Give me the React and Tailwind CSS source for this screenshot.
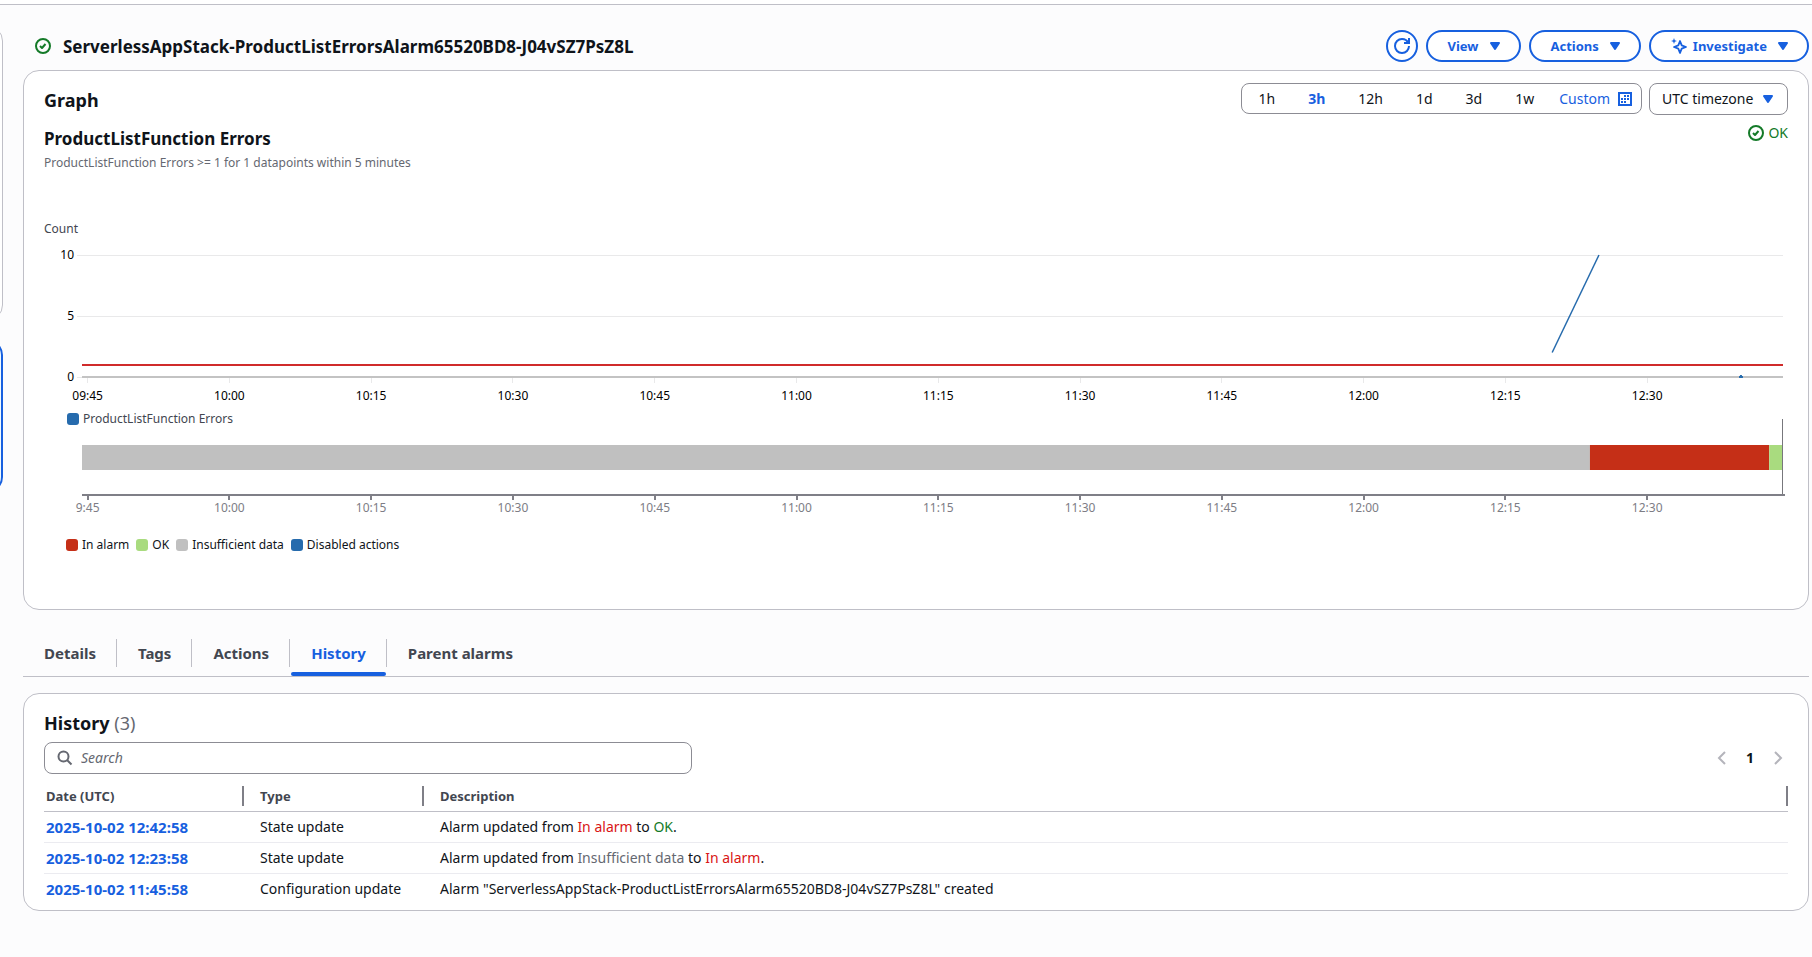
import React from "react";

const TICKS = ["09:45", "10:00", "10:15", "10:30", "10:45", "11:00", "11:15", "11:30", "11:45", "12:00", "12:15", "12:30"];
const tickX = (i) => `${(0.33 + i * 8.335).toFixed(3)}%`;

const RANGES = ["1h", "3h", "12h", "1d", "3d", "1w"];

const LEGEND = [
  { label: "In alarm", swatch: "bg-[#c52f17]" },
  { label: "OK", swatch: "bg-[#a9db7f]" },
  { label: "Insufficient data", swatch: "bg-[#c0c0c0]" },
  { label: "Disabled actions", swatch: "bg-[#266bad]" },
];

const STATE_COLOR = {
  "In alarm": "text-[#d91515]",
  OK: "text-[#147a28]",
  "Insufficient data": "text-[#656871]",
};

const EVENTS = [
  { date: "2025-10-02 12:42:58", type: "State update", from: "In alarm", to: "OK" },
  { date: "2025-10-02 12:23:58", type: "State update", from: "Insufficient data", to: "In alarm" },
  {
    date: "2025-10-02 11:45:58",
    type: "Configuration update",
    text: 'Alarm "ServerlessAppStack-ProductListErrorsAlarm65520BD8-J04vSZ7PsZ8L" created',
  },
];

function OkIcon() {
  return (
    <svg viewBox="0 0 16 16" className="h-4 w-4 shrink-0" fill="none" stroke="#147a28" strokeWidth="2" aria-hidden="true">
      <circle cx="8" cy="8" r="7" />
      <path d="M5 8l2 2 3.500-4" strokeLinejoin="round" />
    </svg>
  );
}

function Caret() {
  return (
    <svg viewBox="0 0 16 16" className="h-4 w-4 shrink-0" aria-hidden="true">
      <path d="M4 5h8l-4 6z" fill="#1760df" stroke="#1760df" strokeWidth="2" strokeLinejoin="round" />
    </svg>
  );
}

function PillButton({ children }) {
  return (
    <button
      type="button"
      className="flex h-8 items-center gap-2 rounded-full border-2 border-[#1760df] bg-white pr-4 pl-5 text-[13px] leading-5 font-bold text-[#1760df]"
    >
      {children}
      <Caret />
    </button>
  );
}

function Header() {
  return (
    <header className="flex h-8 items-center justify-between">
      <div className="flex items-center gap-3 pl-3">
        <OkIcon />
        <h1 className="pt-px text-[17px] leading-6 font-bold">ServerlessAppStack-ProductListErrorsAlarm65520BD8-J04vSZ7PsZ8L</h1>
      </div>
      <div className="flex items-center gap-2">
        <button
          type="button"
          aria-label="Refresh"
          className="flex h-8 w-8 items-center justify-center rounded-full border-2 border-[#1760df] bg-white"
        >
          <svg viewBox="0 0 16 16" className="h-4 w-4" fill="none" stroke="#1760df" strokeWidth="2" aria-hidden="true">
            <path d="M10 5h5V0" />
            <path d="M15 8a6.957 6.957 0 0 1-7 7 6.957 6.957 0 0 1-7-7 6.957 6.957 0 0 1 7-7 6.870 6.870 0 0 1 6.300 4" />
          </svg>
        </button>
        <PillButton>View</PillButton>
        <PillButton>Actions</PillButton>
        <PillButton>
          <span className="flex items-center gap-1.5">
            <svg viewBox="0 0 16 16" className="h-4 w-4" aria-hidden="true">
              <path
                d="M9 3l1.700 4.300L15 9l-4.300 1.700L9 15l-1.700-4.300L3 9l4.300-1.700z"
                fill="none"
                stroke="#1760df"
                strokeWidth="1.800"
                strokeLinejoin="round"
              />
              <path d="M3 0l.8 2.200L6 3l-2.200.8L3 6l-.8-2.200L0 3l2.200-.8z" fill="#1760df" />
            </svg>
            Investigate
          </span>
        </PillButton>
      </div>
    </header>
  );
}

function RangePicker() {
  return (
    <div className="flex items-start gap-[7px]">
      <div className="flex h-[31px] items-center gap-px rounded-lg border border-[#8c8c94] pr-[9px] text-sm leading-5">
        {RANGES.map((r) => (
          <button
            key={r}
            type="button"
            aria-pressed={r === "3h"}
            className={r === "3h" ? "px-4 font-bold text-[#1760df]" : "px-4"}
          >
            {r}
          </button>
        ))}
        <button type="button" className="flex items-center gap-2 pl-2 text-[#1760df]">
          Custom
          <svg viewBox="0 0 14 14" className="h-[14px] w-[14px]" shapeRendering="crispEdges" aria-hidden="true">
            <path d="M0 0h14v14H0z" fill="#1760df" />
            <path d="M2 2h10v10H2z" fill="#fff" />
            <path
              d="M6 3h2v2H6zM9 3h2v2H9zM3 6h2v2H3zM6 6h2v2H6zM9 6h2v2H9zM3 9h2v2H3zM6 9h2v2H6z"
              fill="#1760df"
            />
          </svg>
        </button>
      </div>
      <div className="relative">
        <select
          aria-label="Timezone"
          className="h-8 appearance-none rounded-lg border border-[#8c8c94] bg-white pr-[33px] pl-3 text-sm leading-5"
        >
          <option>UTC timezone</option>
        </select>
        <span className="pointer-events-none absolute inset-y-0 right-3 flex items-center">
          <Caret />
        </span>
      </div>
    </div>
  );
}

function MetricChart() {
  return (
    <div className="flex h-[160px] pr-[5px]">
      <svg className="h-full w-[38px] shrink-0 text-xs" aria-hidden="true">
        <g textAnchor="end" fill="#000">
          <text x="30" y="14">10</text>
          <text x="30" y="75">5</text>
          <text x="30" y="136">0</text>
        </g>
      </svg>
      <svg className="h-full min-w-0 flex-1 overflow-visible text-xs" role="img" aria-label="ProductListFunction Errors over time">
        <g stroke="#e9e9ea" shapeRendering="crispEdges">
          <line x1="-5" x2="100%" y1="10.500" y2="10.500" />
          <line x1="-5" x2="100%" y1="71.500" y2="71.500" />
          <line x1="-5" x2="100%" y1="132.500" y2="132.500" />
          {TICKS.map((t, i) => (
            <line key={t} x1={tickX(i)} x2={tickX(i)} y1="133" y2="138" />
          ))}
        </g>
        <line x1="0" x2="100%" y1="132" y2="132" stroke="#c3c3c3" strokeWidth="2" />
        <line x1="0" x2="100%" y1="120" y2="120" stroke="#d02b2b" strokeWidth="2" />
        <line x1="86.430%" x2="89.180%" y1="107.500" y2="10" stroke="#266bad" strokeWidth="1.500" />
        <svg x="97.410%" y="130" width="4" height="4">
          <path d="M1 0h2v1h1v2H0V1h1z" fill="#266bad" />
        </svg>
        <g textAnchor="middle" fill="#000">
          {TICKS.map((t, i) => (
            <text key={t} x={tickX(i)} y="155">{t}</text>
          ))}
        </g>
      </svg>
    </div>
  );
}

function StateTimeline() {
  return (
    <div className="-mt-2 flex h-[95px] pr-[5px] pl-[38px]">
      <svg className="h-full w-full overflow-visible text-xs" role="img" aria-label="Alarm state timeline">
        <rect x="0" y="26" width="88.650%" height="25" fill="#c0c0c0" />
        <rect x="88.650%" y="26" width="10.540%" height="25" fill="#c52f17" />
        <rect x="99.190%" y="26" width="0.810%" height="25" fill="#a9db7f" />
        <g stroke="#7f7f87" shapeRendering="crispEdges">
          <line x1="99.970%" x2="99.970%" y1="0" y2="75" stroke="#77777c" />
          <line x1="0" x2="100.100%" y1="76" y2="76" strokeWidth="2" />
          {TICKS.map((t, i) => (
            <line key={t} x1={tickX(i)} x2={tickX(i)} y1="77" y2="81" strokeWidth="2" />
          ))}
        </g>
        <g textAnchor="middle" fill="#7d7d85">
          {TICKS.map((t, i) => (
            <text key={t} x={tickX(i)} y="93">{t.replace(/^0/, "")}</text>
          ))}
        </g>
      </svg>
    </div>
  );
}

function GraphPanel() {
  return (
    <section className="mt-2 flex flex-col rounded-2xl border border-[#bfbfc7] bg-white px-5 pt-3 pb-14">
      <div className="flex items-start justify-between">
        <h2 className="pt-[5px] text-lg leading-6 font-bold">Graph</h2>
        <RangePicker />
      </div>
      <div className="flex items-start justify-between pt-2">
        <h3 className="pt-1 text-[17px] leading-6 font-bold">ProductListFunction Errors</h3>
        <span className="flex items-center gap-1 text-sm leading-5 text-[#147a28]">
          <OkIcon />
          OK
        </span>
      </div>
      <p className="pt-1 text-xs leading-4 text-[#656871]">ProductListFunction Errors &gt;= 1 for 1 datapoints within 5 minutes</p>
      <p className="pt-[50px] pb-2 text-xs leading-4 text-[#424650]">Count</p>
      <MetricChart />
      <div className="flex items-center gap-1 pt-[6px] pl-[23px] text-xs leading-4 text-[#424650]">
        <span className="h-3 w-3 rounded-[3px] bg-[#266bad]" />
        ProductListFunction Errors
      </div>
      <StateTimeline />
      <ul className="flex gap-[7px] pt-[23px] pl-[22px] text-xs leading-4">
        {LEGEND.map((l) => (
          <li key={l.label} className="flex items-center gap-1">
            <span className={`h-3 w-3 rounded-[3px] ${l.swatch}`} />
            {l.label}
          </li>
        ))}
      </ul>
    </section>
  );
}

const TABS = ["Details", "Tags", "Actions", "History", "Parent alarms"];

function Tabs() {
  return (
    <div role="tablist" className="mt-5 flex border-b border-[#bfbfc7] text-[15px] leading-5 font-bold text-[#424650]">
      {TABS.map((t, i) => {
        const active = t === "History";
        return (
          <div key={t} className="flex flex-col">
            <button
              type="button"
              role="tab"
              aria-selected={active}
              className={`mt-[9px] h-7 pr-5 pl-[21px] ${i < TABS.length - 1 ? "border-r border-[#bfbfc7]" : ""} ${active ? "text-[#1760df]" : ""}`}
            >
              {t}
            </button>
            <span className={`mx-px mt-[5px] h-1 rounded-sm ${active ? "bg-[#1760df]" : ""}`} />
          </div>
        );
      })}
    </div>
  );
}

function HistoryPanel() {
  return (
    <section className="mt-4 rounded-2xl border border-[#bfbfc7] bg-white px-5 pt-[17px] pb-[6px]">
      <h2 className="text-lg leading-6 font-bold">
        History <span className="font-normal text-[#656871]">(3)</span>
      </h2>
      <div className="flex items-center justify-between pt-[7px]">
        <div className="flex h-8 w-[648px] items-center gap-2 rounded-lg border border-[#8c8c94] px-3">
          <svg viewBox="0 0 16 16" className="h-4 w-4" fill="none" stroke="#656871" strokeWidth="2" aria-hidden="true">
            <circle cx="6.500" cy="6.500" r="5" />
            <path d="M14.500 14.500l-4.500-4.500" />
          </svg>
          <input
            type="text"
            aria-label="Search"
            placeholder="Search"
            className="min-w-0 flex-1 text-sm leading-5 outline-none placeholder:text-[#656871] placeholder:italic"
          />
        </div>
        <nav aria-label="Pagination" className="flex items-center gap-4 pr-[2px]">
          <button type="button" aria-label="Previous page">
            <svg viewBox="0 0 16 16" className="h-4 w-4" fill="none" stroke="#b4b4bb" strokeWidth="2" aria-hidden="true">
              <path d="M11 2L5 8l6 6" />
            </svg>
          </button>
          <button type="button" aria-current="page" className="text-sm leading-5 font-bold">1</button>
          <button type="button" aria-label="Next page">
            <svg viewBox="0 0 16 16" className="h-4 w-4" fill="none" stroke="#b4b4bb" strokeWidth="2" aria-hidden="true">
              <path d="M5 2l6 6-6 6" />
            </svg>
          </button>
        </nav>
      </div>
      <table className="mt-[7px] w-full table-fixed text-left text-sm leading-5">
        <colgroup>
          <col className="w-[200px]" />
          <col className="w-[180px]" />
          <col />
        </colgroup>
        <thead className="text-[13px] text-[#424650]">
          <tr className="border-b border-[#bfbfc7]">
            {["Date (UTC)", "Type", "Description"].map((h, i) => (
              <th key={h} scope="col" className="py-[5px] font-bold">
                <span className={`block border-r-2 border-[#7f7f87] leading-5 ${i === 0 ? "pl-[2px]" : "pl-4"}`}>{h}</span>
              </th>
            ))}
          </tr>
        </thead>
        <tbody>
          {EVENTS.map((e) => (
            <tr key={e.date} className="border-b border-[#ebebf0] last:border-b-0">
              <td className="py-[5px] pl-[2px]">
                <a href="#event" className="block text-[15px] leading-5 font-bold text-[#1760df]">{e.date}</a>
              </td>
              <td className="py-[5px] pl-4">{e.type}</td>
              <td className="py-[5px] pl-4">
                {e.text ?? (
                  <>
                    Alarm updated from <span className={STATE_COLOR[e.from]}>{e.from}</span> to{" "}
                    <span className={STATE_COLOR[e.to]}>{e.to}</span>.
                  </>
                )}
              </td>
            </tr>
          ))}
        </tbody>
      </table>
    </section>
  );
}

export default function App() {
  return (
    <div className="min-h-screen bg-[#fcfcfd] font-['Noto_Sans','Open_Sans',sans-serif] text-[#0f141a]">
      <div className="h-[5px] border-b border-[#bfbfc7] bg-white" />
      <div className="flex">
        <aside className="w-[3px] shrink-0 pt-5" aria-hidden="true">
          <div className="flex flex-col items-end overflow-hidden">
            <div className="h-[296px] w-10 rounded-2xl border border-[#bfbfc7] bg-white" />
            <div className="mt-[18px] h-[154px] w-10 rounded-2xl border-2 border-[#1760df] bg-[#f0fbff]" />
          </div>
        </aside>
        <main className="min-w-0 flex-1 pt-[25px] pr-[3px] pl-5">
          <Header />
          <GraphPanel />
          <Tabs />
          <HistoryPanel />
        </main>
      </div>
    </div>
  );
}
